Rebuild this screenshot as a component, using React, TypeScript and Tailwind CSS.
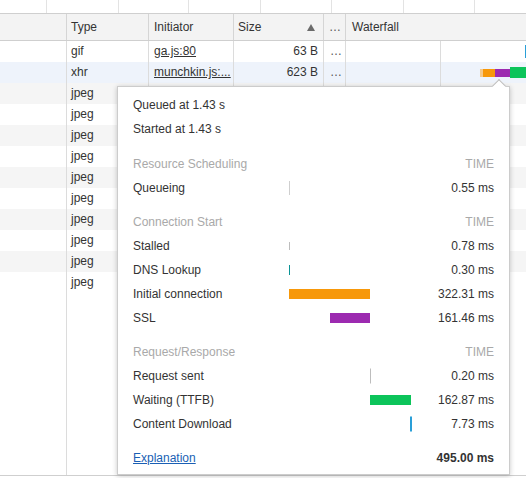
import React from "react";

type Row = { type: string; initiator?: string; size?: string; kind: "white" | "gray" | "selected" };

const rows: Row[] = [
  { type: "gif", initiator: "ga.js:80", size: "63 B", kind: "white" },
  { type: "xhr", initiator: "munchkin.js:...", size: "623 B", kind: "selected" },
  ...Array.from({ length: 10 }, (_, i) => ({
    type: "jpeg",
    kind: (i % 2 === 0 ? "gray" : "white") as Row["kind"],
  })),
];

const overviewLines = ["w-[47px]", "w-[72px]", "w-[70px]", "w-[72px]", "w-[71px]", "w-[72px]", "w-[71px]"];

type Timing = {
  label: string;
  value: string;
  bar?: { left: number; width: number; height: number; color: string };
};

const sections: { title: string; items: Timing[] }[] = [
  {
    title: "Resource Scheduling",
    items: [{ label: "Queueing", value: "0.55 ms", bar: { left: 0, width: 1, height: 14, color: "#cfcfcf" } }],
  },
  {
    title: "Connection Start",
    items: [
      { label: "Stalled", value: "0.78 ms", bar: { left: 0, width: 1, height: 8, color: "#bdbdbd" } },
      { label: "DNS Lookup", value: "0.30 ms", bar: { left: 0, width: 1, height: 10, color: "#0a9396" } },
      { label: "Initial connection", value: "322.31 ms", bar: { left: 0, width: 81, height: 10, color: "#f7980a" } },
      { label: "SSL", value: "161.46 ms", bar: { left: 41, width: 40, height: 10, color: "#9c2ab0" } },
    ],
  },
  {
    title: "Request/Response",
    items: [
      { label: "Request sent", value: "0.20 ms", bar: { left: 81, width: 1, height: 15, color: "#bdbdbd" } },
      { label: "Waiting (TTFB)", value: "162.87 ms", bar: { left: 81, width: 41, height: 10, color: "#0cc45a" } },
      { label: "Content Download", value: "7.73 ms", bar: { left: 121, width: 2, height: 15, color: "#2a9fd8" } },
    ],
  },
];

const rowBg = (kind: Row["kind"]) =>
  kind === "selected" ? "bg-[#eef3fb]" : kind === "gray" ? "bg-[#f5f5f5]" : "bg-white";

function Cells({ row, filler }: { row?: Row; filler?: boolean }) {
  return (
    <>
      <div className="w-[67px] shrink-0 border-r border-[#dcdcdc]" />
      <div className="w-[82px] shrink-0 border-r border-[#dcdcdc] pl-[4px]">{row?.type}</div>
      <div className="w-[85px] shrink-0 border-r border-[#dcdcdc] pl-[5px] truncate">
        {row?.initiator && <span className="underline">{row.initiator}</span>}
      </div>
      <div className="w-[90px] shrink-0 border-r border-[#dcdcdc] pr-[5px] text-right">{row?.size}</div>
      <div className="w-[22px] shrink-0 border-r border-[#dcdcdc] pl-[6px] text-[#555]">
        {row?.size ? "…" : ""}
      </div>
      <div className="relative flex-1 h-full">
        <div className={`absolute top-0 bottom-0 left-[94px] border-l ${filler ? "border-transparent" : "border-[#dcdcdc]"}`} />
        {row?.type === "gif" && <div className="absolute left-[179px] top-[4px] w-[2px] h-[13px] bg-[#2a9fd8]" />}
        {row?.kind === "selected" && (
          <div className="absolute left-[134px] top-0 bottom-0 flex items-center">
            <div className="w-[3px] h-[8px] bg-[#f6c98a]" />
            <div className="w-[12px] h-[8px] bg-[#f7980a]" />
            <div className="w-[15px] h-[8px] bg-[#9c2ab0]" />
            <div className="w-[16px] h-[11px] bg-[#0cc45a]" />
          </div>
        )}
      </div>
    </>
  );
}

function TimingRow({ item }: { item: Timing }) {
  return (
    <div className="flex items-center h-6">
      <div className="w-[156px] shrink-0">{item.label}</div>
      <div className="relative w-[124px] h-full shrink-0">
        {item.bar && (
          <div
            className="absolute top-1/2 -translate-y-1/2"
            style={{ left: item.bar.left, width: item.bar.width, height: item.bar.height, background: item.bar.color }}
          />
        )}
      </div>
      <div className="flex-1 text-right">{item.value}</div>
    </div>
  );
}

export default function App() {
  return (
    <div className="relative w-[526px] h-[478px] overflow-hidden bg-white font-['Liberation_Sans',Arial,sans-serif] text-[12px] text-[#333] flex flex-col">
      {/* overview grid */}
      <div className="flex h-[14px] shrink-0 border-b border-[#cfcfcf]">
        {overviewLines.map((w, i) => (
          <div key={i} className={`${w} shrink-0 border-r border-[#e3e3e3]`} />
        ))}
      </div>

      {/* header */}
      <div className="flex h-[27px] shrink-0 items-stretch bg-[#f3f3f3] border-b border-[#cfcfcf] leading-[26px]">
        <div className="w-[67px] shrink-0 border-r border-[#d5d5d5]" />
        <div className="w-[82px] shrink-0 border-r border-[#d5d5d5] pl-[4px]">Type</div>
        <div className="w-[85px] shrink-0 border-r border-[#d5d5d5] pl-[5px]">Initiator</div>
        <div className="w-[90px] shrink-0 border-r border-[#d5d5d5] pl-[4px] pr-[8px] flex items-center justify-between">
          <span>Size</span>
          <svg width="8" height="7" viewBox="0 0 8 7">
            <path d="M4 0 L8 7 L0 7 Z" fill="#6b6b6b" />
          </svg>
        </div>
        <div className="w-[22px] shrink-0 border-r border-[#d5d5d5] pl-[5px] text-[#555]">…</div>
        <div className="flex-1 pl-[6px]">Waterfall</div>
      </div>

      {/* body */}
      <div className="flex flex-col flex-1 border-b border-[#cfcfcf]">
        {rows.map((row, i) => (
          <div key={i} className={`flex h-[21px] shrink-0 leading-[21px] ${rowBg(row.kind)}`}>
            <Cells row={row} />
          </div>
        ))}
        <div className="flex flex-1">
          <Cells filler />
        </div>
      </div>
      <div className="h-[2px] shrink-0" />

      {/* timing popover */}
      <div className="absolute left-[117px] top-[86px] w-[393px] bg-white border border-[#cccccc] shadow-[0_1px_5px_rgba(0,0,0,0.22)] pl-[15px] pr-[15px] pt-[6px] pb-[4px]">
        <div className="absolute -top-[6px] left-[376px] w-[10px] h-[10px] rotate-45 bg-white border-l border-t border-[#bdbdbd]" />
        <div className="flex items-center h-6">Queued at 1.43 s</div>
        <div className="flex items-center h-6">Started at 1.43 s</div>

        {sections.map((s, i) => (
          <div key={s.title} className={i === 0 ? "mt-[11px]" : "mt-[10px]"}>
            <div className="flex items-center justify-between h-6 text-[#a9a9a9]">
              <span>{s.title}</span>
              <span>TIME</span>
            </div>
            {s.items.map((item) => (
              <TimingRow key={item.label} item={item} />
            ))}
          </div>
        ))}

        <div className="flex items-center justify-between h-6 mt-[10px]">
          <span className="text-[#1a5fb4] underline">Explanation</span>
          <span className="font-bold">495.00 ms</span>
        </div>
      </div>
    </div>
  );
}
